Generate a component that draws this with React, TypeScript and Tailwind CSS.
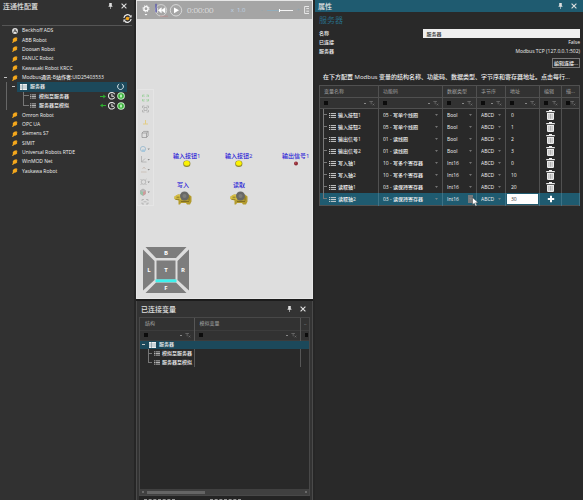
import React from 'react'
import clsx from 'clsx'

const robotsTop = ['ABB Robot', 'Doosan Robot', 'FANUC Robot', 'Kawasaki Robot KRCC']
const robotsBottom = [
  'Omron Robot',
  'OPC UA',
  'Siemens S7',
  'SIMIT',
  'Universal Robots RTDE',
  'WinMOD Net',
  'Yaskawa Robot'
]

const functionCodes = ['05 - 写单个线圈', '01 - 读线圈', '10 - 写多个寄存器', '03 - 读保持寄存器']

const variables = [
  { name: '输入按钮1', code: functionCodes[0], type: 'Bool', address: '0' },
  { name: '输入按钮2', code: functionCodes[0], type: 'Bool', address: '1' },
  { name: '输出信号1', code: functionCodes[1], type: 'Bool', address: '2' },
  { name: '输出信号2', code: functionCodes[1], type: 'Bool', address: '3' },
  { name: '写入轴1', code: functionCodes[2], type: 'Int16', address: '0' },
  { name: '写入轴2', code: functionCodes[2], type: 'Int16', address: '10' },
  { name: '读取轴1', code: functionCodes[3], type: 'Int16', address: '20' },
  { name: '读取轴2', code: functionCodes[3], type: 'Int16', address: '30' }
]

const columns = ['变量名称', '功能码', '数据类型', '字节序', '地址', '编辑', '描...']

export default function App() {
  return (
    <div className="grid h-screen grid-cols-[134fr_181fr_268fr] overflow-hidden bg-[#1c1c1c] font-['Open_Sans','Noto_Sans_CJK_SC',sans-serif] text-[5px] leading-none font-medium text-[#f0f0f0]">
      <ConnectivityPanel />
      <div className="flex min-w-0 flex-col gap-[2px] border-x-2 border-[#262626]">
        <Viewport />
        <ConnectedVariables />
      </div>
      <PropertiesPanel />
    </div>
  )
}

function PanelTitle({ title, className }: { title: string, className?: string }) {
  return (
    <header className={clsx('flex shrink-0 items-center gap-2 text-[#e0e0e0]', className)}>
      <h2 className="flex-1 text-[7px] font-medium">{title}</h2>
      <button type="button" aria-label="固定">
        <svg viewBox="0 0 6 8" className="h-[6px] w-[5px] fill-current">
          <path d="M1.3 0h3.4v3.4L5.6 4v.9H3.4V8h-.8V4.900H.4V4l.9-.6z" />
        </svg>
      </button>
      <button type="button" aria-label="关闭">
        <svg viewBox="0 0 6 6" className="h-[6px] w-[6px]" stroke="currentColor" strokeWidth="1.1">
          <path d="M.6.6l4.800 4.800M5.400.6L.6 5.400" />
        </svg>
      </button>
    </header>
  )
}

/* ---------- Left: connectivity tree ---------- */

function ConnectivityPanel() {
  return (
    <section className="flex min-w-0 flex-col bg-[#313131]">
      <PanelTitle title="连通性配置" className="h-[12px] pr-[7px] pl-[3px]" />
      <div className="mx-[2px] flex h-[14px] justify-end border-b border-[#555]">
        <button type="button" aria-label="刷新" className="mt-[2px] h-[9px]">
          <svg viewBox="0 0 9 9" className="h-[9px] w-[9px]" fill="none">
            <path d="M.9 4A3.700 3.700 0 0 1 7.400 2M8.100 5A3.700 3.700 0 0 1 1.600 7" stroke="#e8e8e8" strokeWidth="1.2" />
            <path d="M8.600.7v2.700H5.900zM.4 8.300V5.600h2.700z" fill="#e8e8e8" />
            <circle cx="4.500" cy="4.500" r="1.800" fill="#f0a31c" />
          </svg>
        </button>
      </div>
      <ul className="grid h-[150px] auto-rows-fr">
        <li className="flex items-center gap-[4px] pl-[12px]">
          <svg viewBox="0 0 6 6" className="h-[6px] w-[6px]">
            <circle cx="3" cy="3" r="2.900" fill="#e0e0e0" />
            <path d="M1.400 4.600L3 1.300l1.600 3.300M2.200 3.400h2.600" stroke="#333" strokeWidth=".7" fill="none" />
          </svg>
          Beckhoff ADS
        </li>
        {robotsTop.map((name) => (
          <PluginRow key={name} name={name} />
        ))}
        <li className="flex items-center whitespace-nowrap">
          <Minus className="mr-[5px] ml-[4px]" />
          <PlugIcon />
          <span className="ml-[4px]">Modbus通讯-B站作者:UID25403533</span>
        </li>
        <li className="flex items-center">
          <span className="ml-[6px] self-stretch border-l border-[#666]" />
          <Minus className="mr-[2px] ml-[5px]" />
          <div className="mr-[7px] flex flex-1 items-center self-stretch bg-[#1c495b] pr-[3px] pl-[3px]">
            <TableIcon className="h-[6px] w-[7px]" />
            <span className="ml-[3px] flex-1">服务器</span>
            <svg viewBox="0 0 7 7" className="h-[7px] w-[7px]" fill="none" stroke="#d9e6ea" strokeWidth="1">
              <path d="M2.200 1a2.900 2.900 0 1 0 2.600 0" />
            </svg>
          </div>
        </li>
        <GroupRow name="模拟至服务器" direction="out" />
        <GroupRow name="服务器至模拟" direction="in" last />
        {robotsBottom.map((name) => (
          <PluginRow key={name} name={name} />
        ))}
      </ul>
    </section>
  )
}

function PluginRow({ name }: { name: string }) {
  return (
    <li className="flex items-center gap-[4px] pl-[12px] whitespace-nowrap">
      <PlugIcon />
      {name}
    </li>
  )
}

function GroupRow({ name, direction, last }: { name: string, direction: 'in' | 'out', last?: boolean }) {
  return (
    <li className="flex items-center whitespace-nowrap">
      <span className="mr-[16px] ml-[6px] self-stretch border-l border-[#666]" />
      <Branch last={last} className="w-[6px]" />
      <ListIcon className="ml-[1px] h-[5px] w-[6px]" />
      <span className="ml-[3px] flex-1">{name}</span>
      <div className="mr-[9px] flex items-center gap-px">
        <svg viewBox="0 0 7 5" className={clsx('mr-px h-[5px] w-[6px]', direction === 'in' && 'rotate-180')}>
          <path d="M0 2h3.800V.3L7 2.500 3.800 4.700V3H0z" fill="#2fae2f" />
        </svg>
        <svg viewBox="0 0 7 7" className="h-[8px] w-[8px]" fill="none" stroke="#e4e4e4" strokeWidth=".9">
          <path d="M5.900 4.600A2.900 2.900 0 1 1 5.900 2M3.400 1.600v2.100h2.100" />
        </svg>
        <svg viewBox="0 0 7 7" className="h-[8px] w-[8px]">
          <circle cx="3.500" cy="3.500" r="2.900" fill="#2fae2f" stroke="#c8ecc8" strokeWidth=".9" />
          <rect x="2.500" y="2.200" width="2" height="2.600" fill="#b4ecb4" />
        </svg>
      </div>
    </li>
  )
}

/* ---------- Middle: 3D view ---------- */

function Viewport() {
  return (
    <section className="relative flex h-[299px] shrink-0 flex-col overflow-hidden border border-[#e6e6e6] bg-[#dedede]">
      <div className="flex h-[18px] shrink-0 items-center bg-[#a5a5a5] pr-[3px] pl-[5px] text-white">
        <button type="button" aria-label="设置" className="flex flex-col items-center">
          <svg viewBox="0 0 8 11" className="h-[11px] w-[8px]" fill="none">
            <circle cx="4" cy="3.700" r="2.100" stroke="#fff" strokeWidth="1.300" />
            <circle cx="4" cy="3.700" r="3.100" stroke="#fff" strokeWidth="1" strokeDasharray="1.200 1.230" />
            <path d="M2.600 9h2.800L4 10.600z" fill="#fff" />
          </svg>
        </button>
        <button type="button" aria-label="重置" className="ml-[4px]">
          <svg viewBox="0 0 14 14" className="h-[14px] w-[14px]" fill="none">
            <circle cx="7" cy="7.300" r="5.700" stroke="#dcdcdc" strokeWidth=".8" />
            <path d="M3.600 4.800v5M7.300 4.800v5L4.300 7.300zM11 4.800v5L7.600 7.300z" fill="#fff" stroke="#fff" strokeWidth=".6" />
            <path d="M2 .8v8.500" stroke="#3434b0" strokeWidth=".9" />
            <path d="M6 13.200h8" stroke="#c07f7f" strokeWidth=".6" />
          </svg>
        </button>
        <button type="button" aria-label="播放" className="ml-px">
          <svg viewBox="0 0 14 14" className="h-[14px] w-[14px]" fill="none">
            <circle cx="7" cy="7.300" r="5.700" stroke="#dcdcdc" strokeWidth=".9" />
            <path d="M5 4.400v5.800l5-2.900z" fill="#fff" />
          </svg>
        </button>
        <span className="ml-[4px] text-[8px] font-light">0:00:00</span>
        <span className="ml-[17px] text-[6px] text-[#bfd4e6]">x&nbsp; 1.0</span>
        <span className="ml-auto text-[6px] text-[#8fa6b3]">-</span>
        <input
          type="range"
          aria-label="仿真速度"
          className="mx-[4px] h-px w-[26px] appearance-none bg-linear-to-r from-[#92acba] from-50% to-[#f4f4f4] to-50% [&::-webkit-slider-thumb]:h-[3px] [&::-webkit-slider-thumb]:w-px [&::-webkit-slider-thumb]:appearance-none [&::-webkit-slider-thumb]:bg-white"
        />
        <span className="text-[6px] text-[#8fa6b3]">+</span>
        <svg viewBox="0 0 5 8" className="ml-[4px] h-[8px] w-[5px]" fill="none" stroke="#eee" strokeWidth=".9">
          <path d="M5 .5H.6v7H5M2.300 2.600H5M2.300 5.200H5" />
        </svg>
      </div>

      <ViewTools />

      <SceneLabel text="输入按钮1" className="left-[36px]" shape="lamp" />
      <SceneLabel text="输入按钮2" className="left-[88px]" shape="lamp" />
      <SceneLabel text="输出信号1" className="left-[145px]" shape="led" />
      <SceneLabel text="写入" className="left-[37px]" shape="motor" />
      <SceneLabel text="读取" className="left-[93px]" shape="motor" />

      <svg viewBox="0 0 46 46" className="absolute bottom-[5px] left-[6px] h-[46px] w-[46px]">
        <g fill="#7d7d7d">
          <path d="M2.500 0h41L33 11H13z" />
          <path d="M0 2.500L11.500 14v19L0 43.500z" />
          <path d="M46 2.500L34.500 14v19L46 43.500z" />
          <path d="M2.500 46L13 35.500h20L43.500 46z" />
          <path d="M13.500 13.500h19v19h-19z" />
        </g>
        <path d="M12.500 32.400h21v2.800h-21z" fill="#3df2ee" />
        <g fill="#fff" fontSize="6" fontWeight="700" textAnchor="middle">
          <text x="23" y="8">B</text>
          <text x="6" y="25">L</text>
          <text x="23" y="25">T</text>
          <text x="40" y="25">R</text>
          <text x="23" y="43">F</text>
        </g>
      </svg>
    </section>
  )
}

function ViewTools() {
  return (
    <div className="absolute top-[88px] left-0 h-[117px] w-[17px] border border-[#e5e5e5]">
      <svg viewBox="0 0 15 115" className="h-full w-full" fill="none" stroke="#a8a8a8" strokeWidth=".7">
        <path
          d="M4.500 7V5h2M8.500 5h2v2M4.500 9v2h2M10.500 9v2h-2M5 5.500l1.500 1.500M10 5.500L8.500 7M5 10.500L6.500 9M10 10.500L8.500 9"
          stroke="#93cf93"
        />
        <path d="M4.500 18v-2h2M8.500 16h2v2M4.500 20v2h2M10.500 20v2h-2M6 17.500h3v3H6z" />
        <path d="M5 34h5M7.500 30v4" stroke="#e3cd86" strokeWidth="1" />
        <path d="M4 43h4.500v4.500H4zM4 43l1.600-1.600h4.500L8.500 43M10.100 41.400v4.500L8.500 47.500" stroke="#8f8f8f" />
        <circle cx="5" cy="59" r="2.600" stroke="#8cb3cd" />
        <path d="M4 59.500h3v2.500H4z" fill="#a6c7db" stroke="none" />
        <path d="M3.500 66v6h5M3.500 72l3.500-3.500" />
        <path d="M3 82h5.500M4.500 79l1.500-2 1.500 2" stroke="#c5b7ae" />
        <circle cx="5.500" cy="92" r="2.300" />
        <path d="M2.500 89l1.300 1.300M8.500 89l-1.300 1.300M2.500 95l1.300-1.300M8.500 95l-1.300-1.300" />
        <path d="M2.500 100.500L5 99l2.500 1.500v3.500L5 105.500 2.500 104z" fill="#b9b9b9" />
        <path d="M5 102.200l2.500-1.500v3.300L5 105.500z" fill="#d29a9a" stroke="none" />
        <path d="M2.500 100.700l2.500 1.500v3.300L2.500 104z" fill="#96c5a8" stroke="none" />
        <path d="M4 111v-1.500h2M8 109.500h2v1.500M4 112.500v1.500h2M8 114h2v-1.500M5.500 111.800h3" />
        <g fill="#8a8a8a" stroke="none">
          <path d="M9.500 58.500h2.400l-1.200 1.500zM9.500 69h2.400l-1.200 1.500zM9.500 79h2.400l-1.200 1.500zM9.500 91.500h2.400l-1.200 1.500zM9.500 101.500h2.400l-1.200 1.500z" />
        </g>
      </svg>
    </div>
  )
}

function SceneLabel({ text, shape, className }: { text: string, shape: 'lamp' | 'led' | 'motor', className: string }) {
  return (
    <div
      className={clsx(
        'absolute flex flex-col items-center text-[6px] whitespace-nowrap text-[#2a22d6]',
        shape === 'motor' ? 'top-[181px] gap-[3px]' : 'top-[152px] gap-px',
        className
      )}
    >
      {text}
      {shape === 'lamp' && (
        <svg viewBox="0 0 8 7" className="h-[7px] w-[8px]">
          <ellipse cx="3.800" cy="3.700" rx="3.600" ry="3.200" fill="#8f872f" />
          <ellipse cx="3.800" cy="3.300" rx="2.900" ry="2.500" fill="#fbf200" />
        </svg>
      )}
      {shape === 'led' && (
        <svg viewBox="0 0 8 7" className="h-[7px] w-[8px]">
          <circle cx="4" cy="3.500" r="2" fill="#8c2b33" />
          <circle cx="3.700" cy="3" r=".7" fill="#c56" />
        </svg>
      )}
      {shape === 'motor' && (
        <svg viewBox="0 0 18 14" className="h-[14px] w-[18px]">
          <path d="M.5 5.500l3.500-2h11l2.500 2v5L16 13.500h-3L12 12H7l-1 1.500H4.500V9.500L.5 8z" fill="#b39b2e" />
          <path d="M.5 5.500L4 3.500l3.500 1v4l-3 1L.5 8z" fill="#d8c044" />
          <path d="M1.500 8.300h4M7 10.500h8M2.500 6.200h3M15 5.500v4" stroke="#6b5c1a" strokeWidth=".7" />
          <circle cx="10.500" cy="5" r="4.500" fill="#686866" />
          <circle cx="10.500" cy="5" r="2" fill="#7d7d79" />
        </svg>
      )}
    </div>
  )
}

/* ---------- Middle: connected variables ---------- */

function ConnectedVariables() {
  return (
    <section className="flex min-h-0 flex-1 flex-col border-x border-[#4a4a4a] bg-[#333] px-[2px]">
      <PanelTitle title="已连接变量" className="h-[16px] pr-[4px] pl-[2px]" />
      <div className="flex min-h-0 flex-1 flex-col border border-[#484848] bg-[#292929]">
        <table className="w-full table-fixed border-collapse">
          <colgroup>
            <col className="w-[32%]" />
            <col className="w-[63%]" />
            <col className="w-[5%]" />
          </colgroup>
          <thead className="bg-[#323232]">
            <tr className="h-[12px] text-left text-[#a2a2a2]">
              <th className="border-r border-[#565656] pl-[5px] font-normal">结构</th>
              <th className="border-r border-[#565656] pl-[5px] font-normal">模拟变量</th>
              <th className="pl-[3px] font-normal">..</th>
            </tr>
            <tr className="h-[10px] border-y border-[#3c3c3c]">
              <td className="border-r border-[#565656]"><Filter /></td>
              <td className="border-r border-[#565656]"><Filter /></td>
              <td className="pl-[4px]"><span className="block h-[4px] w-[3px] bg-[#0c0c0c]" /></td>
            </tr>
          </thead>
          <tbody>
            <tr className="h-[9px] bg-[#1c495b]">
              <td>
                <div className="flex items-center pl-[2px]">
                  <Minus />
                  <TableIcon className="ml-[4px] h-[6px] w-[7px]" />
                  <span className="ml-[3px]">服务器</span>
                </div>
              </td>
              <td />
              <td />
            </tr>
            {['模拟至服务器', '服务器至模拟'].map((name, i) => (
              <tr key={name} className="h-[9px]">
                <td className="border-r border-[#565656]">
                  <div className="flex h-[9px] items-center pl-[8px] whitespace-nowrap">
                    <Branch last={i === 1} className="w-[4px]" />
                    <ListIcon className="ml-[2px] h-[5px] w-[6px]" />
                    <span className="ml-[2px]">{name}</span>
                  </div>
                </td>
                <td className="border-r border-[#565656]" />
                <td />
              </tr>
            ))}
          </tbody>
        </table>
        <div className="mt-auto flex h-[6px] items-center gap-[3px] bg-[#404040] px-[2px]">
          <span className="h-[2px] w-[2px] rounded-full bg-[#777]" />
          <span className="h-[3px] w-[35%] bg-[#656565]" />
          <span className="ml-auto h-[2px] w-[2px] rounded-full bg-[#777]" />
        </div>
      </div>
      {/* Top edge of the docked tab strip */}
      <div className="flex h-[4px] shrink-0 items-end gap-[35px] bg-[#242424] pl-[5px]">
        <span className="w-[31px] border-b border-dashed border-[#999]" />
        <span className="w-[31px] border-b border-dashed border-[#999]" />
      </div>
    </section>
  )
}

/* ---------- Right: properties ---------- */

function PropertiesPanel() {
  return (
    <section className="relative flex min-w-0 flex-col bg-[#292929]">
      <PanelTitle title="属性" className="h-[12px] bg-[#1f5b70] pr-[6px] pl-[3px]" />
      <div className="flex flex-col pr-[3px] pl-[4px]">
        <h3 className="mt-[4px] h-[12px] text-[8px] font-normal text-[#286b84]">服务器</h3>
        <div className="flex h-[10px] items-center">
          <label htmlFor="server-name" className="w-[40%]">名称</label>
          <input
            id="server-name"
            defaultValue="服务器"
            className="h-[9px] min-w-0 flex-1 bg-[#efefef] px-[3px] text-[#333]"
          />
        </div>
        <div className="flex h-[9px] items-center justify-between">
          <span>已连接</span>
          <span>False</span>
        </div>
        <div className="flex h-[9px] items-center justify-between">
          <span>服务器</span>
          <span>Modbus TCP (127.0.0.1:502)</span>
        </div>
        <button type="button" className="mt-[2px] h-[10px] self-end border border-[#777] px-px">
          编辑连接...
        </button>
        <p className="mt-[4px] h-[13px] truncate pl-[4px] text-[6px] leading-[10px]">
          在下方配置 Modbus 变量的结构名称、功能码、数据类型、字节序和寄存器地址。点击每行...
        </p>
        <table className="w-full table-fixed border-collapse border border-[#505050]">
          <colgroup>
            <col className="w-[59px]" />
            <col className="w-[64px]" />
            <col className="w-[34px]" />
            <col className="w-[29px]" />
            <col className="w-[34px]" />
            <col className="w-[22px]" />
            <col />
          </colgroup>
          <thead className="bg-[#323232]">
            <tr className="h-[12px] text-left text-[#a2a2a2]">
              {columns.map((label) => (
                <th key={label} className="border border-[#505050] pl-[4px] font-normal whitespace-nowrap">{label}</th>
              ))}
            </tr>
            <tr className="h-[11px]">
              {columns.map((label, i) => (
                <td key={label} className="border border-[#505050]">
                  <Filter compact={i > 4} />
                </td>
              ))}
            </tr>
          </thead>
          <tbody>
            {variables.map((row, i) => (
              <VariableRow key={row.name} row={row} active={i === variables.length - 1} />
            ))}
          </tbody>
        </table>
      </div>
      <svg viewBox="0 0 7 10" className="absolute top-[197px] left-[157px] h-[10px] w-[7px]">
        <path d="M.5.5v7.300l1.800-1.600 1.300 3 1.300-.6-1.300-2.800h2.600z" fill="#fff" stroke="#222" strokeWidth=".4" />
      </svg>
    </section>
  )
}

function VariableRow({ row, active }: { row: (typeof variables)[number], active: boolean }) {
  const cell = clsx('border-r p-0', active ? 'border-[#3d7387]' : 'border-[#505050]')
  return (
    <tr className={clsx('h-[12px]', active && 'bg-[#1f5b70]')}>
      <td className={cell}>
        <div className="flex h-[12px] items-center pl-[3px]">
          <Branch last={active} className="w-[4px]" />
          <ListIcon className="ml-[2px] h-[5px] w-[7px]" />
          <span className="ml-[2px]">{row.name}</span>
        </div>
      </td>
      <td className={cell}><Dropdown label="功能码" value={row.code} options={functionCodes} /></td>
      <td className={cell}><Dropdown label="数据类型" value={row.type} options={['Bool', 'Int16']} pressed={active} /></td>
      <td className={cell}><Dropdown label="字节序" value="ABCD" options={['ABCD', 'CDAB']} /></td>
      <td className={cell}>
        <input
          aria-label="地址"
          defaultValue={row.address}
          className={clsx(
            'ml-px block h-[10px] w-[31px] px-[4px]',
            active ? 'bg-white text-[#333]' : 'bg-transparent'
          )}
        />
      </td>
      <td className={cell}>
        {active ? (
          <button type="button" aria-label="添加" className="mx-auto block">
            <svg viewBox="0 0 8 8" className="h-[8px] w-[8px] fill-white">
              <path d="M3 .8h2V3h2.200v2H5v2.200H3V5H.8V3H3z" />
            </svg>
          </button>
        ) : (
          <button type="button" aria-label="删除" className="mx-auto block">
            <svg viewBox="0 0 9 10" className="h-[10px] w-[9px]">
              <path d="M3 0h3v1h2.800v1.200H.2V1H3zM1 3h7v6.200l-.8.8H1.800L1 9.200z" fill="#ececec" />
              <path d="M2.900 4v4.800M4.500 4v4.800M6.100 4v4.800" stroke="#8a8a8a" strokeWidth=".6" />
            </svg>
          </button>
        )}
      </td>
      <td className={cell} />
    </tr>
  )
}

function Dropdown({ label, value, options, pressed }: { label: string, value: string, options: string[], pressed?: boolean }) {
  return (
    <div className="flex h-[12px] items-center pl-[4px]">
      <select aria-label={label} defaultValue={value} className="min-w-0 flex-1 appearance-none bg-transparent">
        {options.map((option) => (
          <option key={option}>{option}</option>
        ))}
      </select>
      <span className={clsx('mr-[3px] flex h-[8px] w-[5px] items-center justify-center', pressed && 'bg-[#77797b]')}>
        <svg viewBox="0 0 4 2" className="h-[2px] w-[3px]" fill="#8c8c8c">
          <path d="M0 0h4L2 2z" />
        </svg>
      </span>
    </div>
  )
}

/* ---------- Shared bits ---------- */

function Filter({ compact }: { compact?: boolean }) {
  return (
    <div className="flex items-center pr-[3px] pl-[4px]">
      <span className="mr-auto h-[4px] w-[4px] bg-[#0c0c0c]" />
      {!compact && <span className="mr-[3px] h-px w-[2px] bg-[#888]" />}
      <svg viewBox="0 0 7 6" className="h-[5px] w-[6px]" fill="none" stroke="#777" strokeWidth=".8">
        <path d="M.3.600h4.400M2.500.600V4M4.200 3.200l2 2M6.200 3.200l-2 2" />
      </svg>
    </div>
  )
}

function Branch({ last, className }: { last?: boolean, className?: string }) {
  return (
    <span className={clsx('grid grid-rows-2 self-stretch', className)}>
      <span className="border-b border-l border-[#777]" />
      <span className={clsx(!last && 'border-l border-[#777]')} />
    </span>
  )
}

function Minus({ className }: { className?: string }) {
  return <span className={clsx('h-px w-[3px] bg-[#c4c4c4]', className)} />
}

function PlugIcon() {
  return (
    <svg viewBox="0 0 6 6" className="h-[6px] w-[6px] shrink-0">
      <path d="M1.600 1.300L3.400.300l.5.500 1-.6.300.5-.6.700 1.100.200-.8 1 .4.600-1.400 1.300-1.500.3L.800 6 0 5.400l.900-1.200L.700 2.600z" fill="#f5a81c" />
    </svg>
  )
}

function TableIcon({ className }: { className?: string }) {
  return (
    <svg viewBox="0 0 7 6" className={className}>
      <path d="M0 0h7v6H0z" fill="#f0f0f0" />
      <path d="M0 2h7M0 4h7M2.500 0v6" stroke="#5d7f8c" strokeWidth=".5" />
    </svg>
  )
}

function ListIcon({ className }: { className?: string }) {
  return (
    <svg viewBox="0 0 7 5" className={className} stroke="#dadada" strokeWidth=".9">
      <path d="M0 .600h1.200M1.800.600H7M0 2.500h1.200M1.800 2.500H7M0 4.400h1.200M1.800 4.400H7" />
    </svg>
  )
}
